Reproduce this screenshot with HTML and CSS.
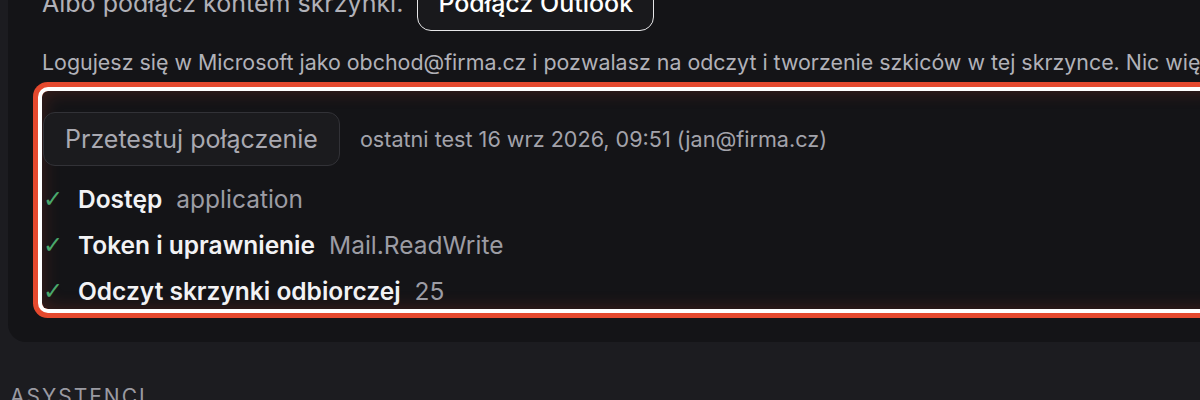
FILE: index.html
```html
<!DOCTYPE html>
<html lang="pl">
<head>
  <meta charset="UTF-8" />
  <title>Skrzynka – połączenie</title>
  <link rel="stylesheet" href="styles.css">
</head>
<body>
  <div class="page">
    <section class="card">
      <div class="connect-row">
        <span class="connect-text">Albo podłącz kontem skrzynki.</span>
        <button class="outline-btn">Podłącz Outlook</button>
      </div>

      <p class="hint">Logujesz się w Microsoft jako obchod@firma.cz i pozwalasz na odczyt i tworzenie szkiców w tej skrzynce. Nic więcej nie jest wysyłane bez Twojej zgody.</p>

      <div class="test-block">
        <div class="test-row">
          <button class="ghost-btn">Przetestuj połączenie</button>
          <span class="test-meta">ostatni test 16 wrz 2026, 09:51 (jan@firma.cz)</span>
        </div>

        <ul class="checks">
          <li><span class="tick">✓</span><strong>Dostęp</strong><span class="value">application</span></li>
          <li><span class="tick">✓</span><strong>Token i uprawnienie</strong><span class="value">Mail.ReadWrite</span></li>
          <li><span class="tick">✓</span><strong>Odczyt skrzynki odbiorczej</strong><span class="value">25</span></li>
        </ul>
      </div>
    </section>

    <h2 class="section-title">Asystenci</h2>
  </div>
</body>
</html>
```

FILE: styles.css
```css
html, body {
  margin: 0;
  height: 100%;
}

body {
  background: #1c1c20;
  color: #e8e8ec;
  font-family: Inter, "Noto Sans", sans-serif;
  overflow: hidden;
}

.page {
  width: 1400px;
  padding-left: 8px;
}

.card {
  margin-top: -60px;
  padding: 35px 0 33px 34px;
  background: #141417;
  border-radius: 18px;
}

.connect-row {
  display: flex;
  align-items: center;
  gap: 14px;
}

.connect-text {
  font-size: 25px;
  color: #b1b1b8;
}

.outline-btn {
  height: 56px;
  padding: 0 20px;
  font-family: inherit;
  font-size: 25px;
  font-weight: 500;
  color: #ffffff;
  background: #19191c;
  border: 1.5px solid #e6e6e8;
  border-radius: 14px;
}

.hint {
  margin: 17px 0 0;
  font-size: 21.4px;
  line-height: 28px;
  color: #b1b1b8;
  white-space: nowrap;
}

.test-block {
  margin-top: 15px;
  padding: 21px 0 1px;
  border-radius: 6px;
  box-shadow:
    0 0 0 4px #ffffff,
    0 0 0 9px #e5492e,
    inset 0 0 18px rgba(229, 73, 46, 0.22);
}

.test-row {
  display: flex;
  align-items: center;
  gap: 20px;
  padding-left: 1px;
}

.ghost-btn {
  height: 54px;
  padding: 0 21px;
  font-family: inherit;
  font-size: 25px;
  color: #a9a9b1;
  background: #1b1b1e;
  border: 1px solid #323237;
  border-radius: 12px;
}

.test-meta {
  font-size: 21.6px;
  color: #a3a3ab;
}

.checks {
  list-style: none;
  margin: 16px 0 0;
  padding: 0;
  display: flex;
  flex-direction: column;
  gap: 12px;
}

.checks li {
  display: flex;
  align-items: center;
  height: 34px;
  font-size: 24.5px;
}

.tick {
  width: 35px;
  padding-left: 1px;
  font-family: "DejaVu Sans", sans-serif;
  font-size: 24px;
  color: #4aa86c;
}

.checks strong {
  font-weight: 600;
  color: #f2f2f4;
}

.value {
  margin-left: 14px;
  color: #9c9ca4;
}

.section-title {
  margin: 42px 0 0 2px;
  font-size: 21px;
  font-weight: 400;
  letter-spacing: 2px;
  text-transform: uppercase;
  color: #9a9aa2;
}
```
